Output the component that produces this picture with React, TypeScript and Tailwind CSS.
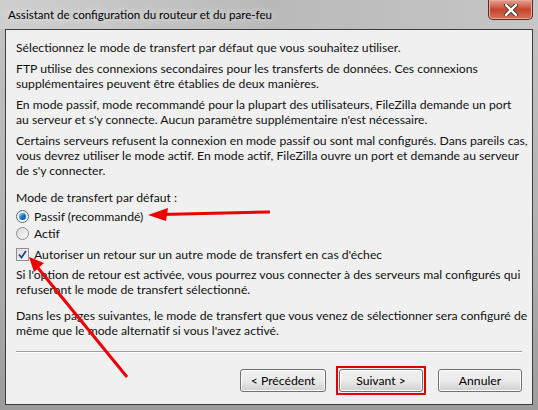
import React from 'react';

// Boutons style Windows 7
const btn =
  'h-[23px] rounded-[3px] border border-[#707070] bg-gradient-to-b from-[#f2f2f2] via-[#ebebeb] to-[#cfcfcf] text-[12.2px] text-black shadow-[inset_0_0_0_1px_#fcfcfc]';

export default function App() {
  return (
    <div
      className="relative w-[538px] h-[410px] overflow-hidden flex flex-col bg-gradient-to-b from-[#c4c4c4] via-[#b4b4b4] to-[#9c9c9c] text-[#111111] whitespace-nowrap"
      style={{ fontFamily: 'Lato, "Noto Sans", sans-serif' }}
    >
      {/* --- barre de titre --- */}
      <div className="h-[29px] flex items-start justify-between pl-[8px] pr-[5px] bg-gradient-to-r from-[#cfcfcf] via-[#b9b9b9] to-[#c6c6c6]">
        <span className="mt-[6px] text-[11.6px] leading-[18px] text-black [text-shadow:0_0_8px_#ffffff]">
          Assistant de configuration du routeur et du pare-feu
        </span>
        <button
          className="w-[45px] h-[20px] rounded-b-[5px] border border-t-0 border-[#5b2b24] bg-gradient-to-b from-[#e5a293] via-[#c7442b] to-[#d5705a] flex items-center justify-center shadow-[inset_0_0_0_1px_#eaa99b]"
          aria-label="Fermer"
        >
          <svg width="16" height="12" viewBox="0 0 16 12">
            <path d="M3 1 L13 11 M13 1 L3 11" stroke="#3c3c3c" strokeWidth="4.2" strokeLinecap="round" />
            <path d="M3 1 L13 11 M13 1 L3 11" stroke="#ffffff" strokeWidth="2.4" strokeLinecap="round" />
          </svg>
        </button>
      </div>

      {/* --- zone client --- */}
      <div className="flex-1 mx-[5px] mb-[5px] border border-[#3c3c3c] bg-[#f0f0f0] flex flex-col px-[10px] pt-[10px] pb-[9px] text-[12.2px] leading-[15px]">
        <p className="mb-[6px]">Sélectionnez le mode de transfert par défaut que vous souhaitez utiliser.</p>
        <p className="mb-[6px]">
          FTP utilise des connexions secondaires pour les transferts de données. Ces connexions
          <br />
          supplémentaires peuvent être établies de deux manières.
        </p>
        <p className="mb-[6px]">
          En mode passif, mode recommandé pour la plupart des utilisateurs, FileZilla demande un port
          <br />
          au serveur et s'y connecte. Aucun paramètre supplémentaire n'est nécessaire.
        </p>
        <p className="mb-[12px]">
          Certains serveurs refusent la connexion en mode passif ou sont mal configurés. Dans pareils cas,
          <br />
          vous devrez utiliser le mode actif. En mode actif, FileZilla ouvre un port et demande au serveur
          <br />
          de s'y connecter.
        </p>

        <p className="mb-[3px]">Mode de transfert par défaut :</p>
        <label className="flex items-center gap-[5px] h-[17px]">
          <span className="w-[13px] h-[13px] rounded-full border border-[#4a6c8c] bg-gradient-to-b from-[#e8e8e8] to-[#ffffff] flex items-center justify-center">
            <span className="w-[7px] h-[7px] rounded-full bg-gradient-to-br from-[#8fd4f7] via-[#1a7cc0] to-[#0a4a80]" />
          </span>
          Passif (recommandé)
        </label>
        <label className="flex items-center gap-[5px] h-[17px] mb-[4px]">
          <span className="w-[13px] h-[13px] rounded-full border border-[#8f8f8f] bg-gradient-to-br from-[#d8d8d8] to-[#fbfbfb]" />
          Actif
        </label>
        <label className="flex items-center gap-[5px] h-[17px] mb-[4px]">
          <span className="w-[13px] h-[13px] border border-[#8f8f8f] bg-gradient-to-br from-[#dedede] to-[#fafafa] flex items-center justify-center">
            <svg width="9" height="9" viewBox="0 0 9 9">
              <path d="M1 4.5 L3.5 7.5 L8 1" fill="none" stroke="#2b3e8c" strokeWidth="1.8" />
            </svg>
          </span>
          Autoriser un retour sur un autre mode de transfert en cas d'échec
        </label>
        <p className="mb-[11px]">
          Si l'option de retour est activée, vous pourrez vous connecter à des serveurs mal configurés qui
          <br />
          refuseront le mode de transfert sélectionné.
        </p>
        <p>
          Dans les pages suivantes, le mode de transfert que vous venez de sélectionner sera configuré de
          <br />
          même que le mode alternatif si vous l'avez activé.
        </p>

        <div className="mt-auto border-t border-[#a0a0a0] shadow-[0_1px_0_#ffffff]" />
        <div className="flex justify-end items-center mt-[14px]">
          <button className={`${btn} w-[86px]`}>&lt; Précédent</button>
          <div className="ml-[10px] w-[90px] h-[29px] flex items-center justify-center border-[2px] border-[#e40000]">
            <button className={`${btn} w-[84px]`}>Suivant &gt;</button>
          </div>
          <button className={`${btn} ml-[12px] w-[84px]`}>Annuler</button>
        </div>
      </div>

      {/* --- flèches rouges d'annotation --- */}
      <svg className="absolute inset-0 pointer-events-none" width="538" height="410" viewBox="0 0 538 410">
        <line x1="270" y1="212" x2="162" y2="214.5" stroke="#ee0000" strokeWidth="3" />
        <polygon points="148,215 168,208 166,221" fill="#ee0000" />
        <line x1="127" y1="377" x2="38" y2="268" stroke="#ee0000" strokeWidth="3" />
        <polygon points="29,257 44,263 34,272" fill="#ee0000" />
      </svg>
    </div>
  );
}
